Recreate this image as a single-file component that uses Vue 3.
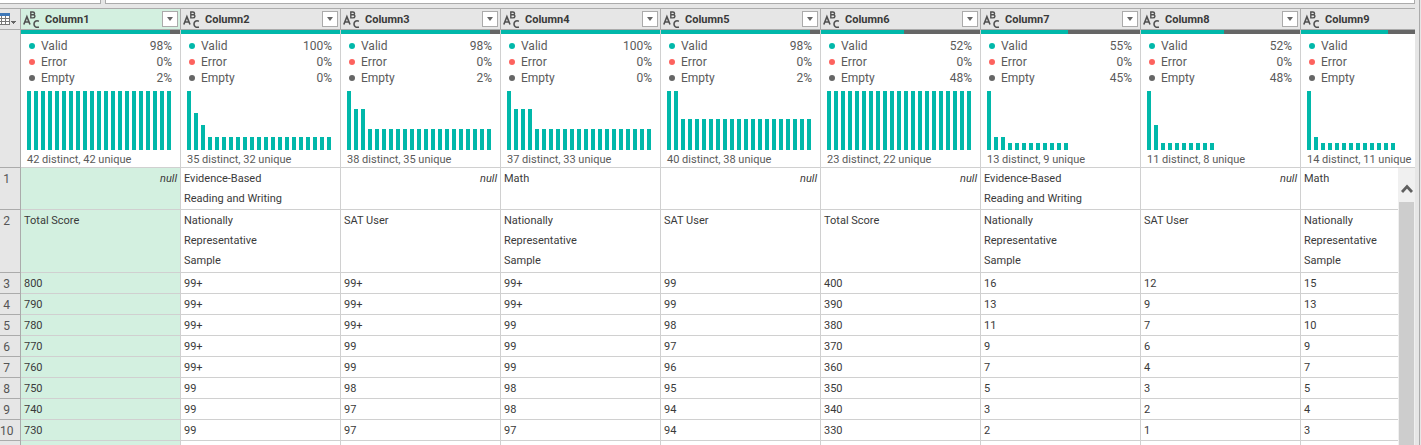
<script setup>
const run = (n, h) => Array(n).fill(h)

const columns = [
  { name: 'Column1', stats: ['98%', '0%', '2%'], share: 94, bars: run(21, 59), distinct: 42, unique: 42 },
  { name: 'Column2', stats: ['100%', '0%', '0%'], share: 100, bars: [59, 37, 25, ...run(18, 13)], distinct: 35, unique: 32 },
  { name: 'Column3', stats: ['98%', '0%', '2%'], share: 94, bars: [59, 41, 41, ...run(18, 21)], distinct: 38, unique: 35 },
  { name: 'Column4', stats: ['100%', '0%', '0%'], share: 100, bars: [59, 41, 41, 41, ...run(17, 21)], distinct: 37, unique: 33 },
  { name: 'Column5', stats: ['98%', '0%', '2%'], share: 94, bars: [59, 59, ...run(19, 31)], distinct: 40, unique: 38 },
  { name: 'Column6', stats: ['52%', '0%', '48%'], share: 52, bars: run(21, 59), distinct: 23, unique: 22 },
  { name: 'Column7', stats: ['55%', '0%', '45%'], share: 55, bars: [59, 13, 13, ...run(9, 7)], distinct: 13, unique: 9 },
  { name: 'Column8', stats: ['52%', '0%', '48%'], share: 52, bars: [59, 25, ...run(8, 7)], distinct: 11, unique: 8 },
  { name: 'Column9', stats: null, share: 76, bars: [59, 13, ...run(11, 7)], distinct: 14, unique: 11 }
]

const measures = ['Valid', 'Error', 'Empty']

const sample = 'Nationally\nRepresentative\nSample'
const reading = 'Evidence-Based\nReading and Writing'

const rows = [
  [null, reading, null, 'Math', null, null, reading, null, 'Math'],
  ['Total Score', sample, 'SAT User', sample, 'SAT User', 'Total Score', sample, 'SAT User', sample],
  ['800', '99+', '99+', '99+', '99', '400', '16', '12', '15'],
  ['790', '99+', '99+', '99+', '99', '390', '13', '9', '13'],
  ['780', '99+', '99+', '99', '98', '380', '11', '7', '10'],
  ['770', '99+', '99', '99', '97', '370', '9', '6', '9'],
  ['760', '99+', '99', '99', '96', '360', '7', '4', '7'],
  ['750', '99', '98', '98', '95', '350', '5', '3', '5'],
  ['740', '99', '97', '98', '94', '340', '3', '2', '4'],
  ['730', '99', '97', '97', '94', '330', '2', '1', '3'],
  ['', '', '', '', '', '', '', '', '']
]
</script>

<template>
  <div class="editor">
    <div class="formula">
      <div class="formula-name"></div>
      <div class="formula-text"></div>
    </div>
    <div class="viewport">
      <table class="grid">
        <colgroup>
          <col class="col-index" />
          <col v-for="c in columns" :key="c.name" class="col-data" />
        </colgroup>
        <thead>
          <tr class="names">
            <th class="corner">
              <button class="table-menu" aria-label="Table menu">
                <svg width="16" height="14" viewBox="0 0 16 14" shape-rendering="crispEdges">
                  <rect x="0" y="1" width="10" height="12" fill="#777" />
                  <rect x="0" y="1" width="10" height="3" fill="#3f78b8" />
                  <path d="M0 4h1v2H0zM2 4h3v2H2zM6 4h3v2H6zM0 7h1v2H0zM2 7h3v2H2zM6 7h3v2H6zM0 10h1v2H0zM2 10h3v2H2zM6 10h3v2H6z" fill="#fff" />
                  <path d="M11 9h5v1h-1v1h-1v1h-1v-1h-1v-1h-1z" fill="#666" />
                </svg>
              </button>
            </th>
            <th v-for="(c, i) in columns" :key="c.name" :class="{ selected: i === 0 }" scope="col">
              <div class="name">
                <svg class="type" width="17" height="18" viewBox="0 0 17 18" fill="none" stroke="#505050" stroke-width="1.6">
                  <path d="M.8 14.5 3.9 6.7 7 14.5M1.9 12h4" />
                  <path d="M7.8 2v5.9h2.1c2.6 0 2.6-3 .4-3.1H7.8h2.1c2.3 0 2.1-2.8 0-2.8z" stroke-width="1.4" />
                  <path d="M15.9 11.2c-2.7-1.1-4.9.2-4.9 2.9s2.2 3.8 4.9 2.8" />
                </svg>
                <span class="label">{{ c.name }}</span>
                <button v-if="c.stats" class="filter" :aria-label="'Filter ' + c.name">
                  <svg width="6" height="4" viewBox="0 0 6 4"><path d="M0 0h6L3 4z" fill="#666" /></svg>
                </button>
              </div>
            </th>
          </tr>
          <tr class="profiles">
            <th class="index"></th>
            <td v-for="c in columns" :key="c.name">
              <div class="quality"><div class="quality-valid" :style="{ width: c.share + '%' }"></div></div>
              <div class="profile">
                <dl class="stats">
                  <div v-for="(m, k) in measures" :key="m" class="stat" :class="m.toLowerCase()">
                    <dt>{{ m }}</dt>
                    <dd v-if="c.stats">{{ c.stats[k] }}</dd>
                  </div>
                </dl>
                <div class="bars">
                  <div v-for="(h, b) in c.bars" :key="b" class="bar" :style="{ height: h + 'px' }"></div>
                </div>
                <div class="summary">{{ c.distinct }} distinct, {{ c.unique }} unique</div>
              </div>
            </td>
          </tr>
        </thead>
        <tbody>
          <tr v-for="(row, r) in rows" :key="r">
            <th class="index" scope="row"><div class="number">{{ r < 10 ? r + 1 : '' }}</div></th>
            <td v-for="(v, i) in row" :key="i" class="cell" :class="{ selected: i === 0, nil: v === null }">{{ v === null ? 'null' : v }}</td>
          </tr>
        </tbody>
      </table>
      <div class="scrollbar">
        <button class="scroll-up" aria-label="Scroll up">
          <svg width="12" height="10" viewBox="0 0 12 10"><path d="M1 8 6 2.5 11 8" fill="none" stroke="#606060" stroke-width="2.8" /></svg>
        </button>
        <div class="thumb"></div>
      </div>
    </div>
  </div>
</template>

<style>
body {
  background: #e6e6e6;
}
</style>

<style scoped>
.editor {
  box-sizing: border-box;
  display: flex;
  flex-direction: column;
  height: 100vh;
  margin-right: 1px;
  padding-right: 4px;
  border-right: 1px solid #ababab;
  overflow: hidden;
  background: #e6e6e6;
  color: #3a3a3a;
  font-family: Roboto, "Open Sans", sans-serif;
  font-size: 11px;
}
.formula {
  display: flex;
  flex: none;
  gap: 4px;
  height: 4px;
  margin-bottom: 4px;
}
.formula-name,
.formula-text {
  box-sizing: border-box;
  border: 1px solid #ababab;
  border-top: 0;
  background: #fff;
}
.formula-name {
  width: 101px;
  border-left: 0;
}
.formula-text {
  flex: 1;
}
.viewport {
  position: relative;
  flex: 1;
  min-height: 0;
  overflow: hidden;
  border-top: 1px solid #ababab;
}
.grid {
  width: 100%;
  table-layout: fixed;
  border-collapse: separate;
  border-spacing: 0;
}
.col-index {
  width: 21px;
}
.col-data {
  width: 160px;
}
.col-data:last-child {
  width: auto;
}
th,
td {
  box-sizing: border-box;
  padding: 0;
  border-right: 1px solid #d0d0d0;
  border-bottom: 1px solid #d0d0d0;
  background: #fff;
  text-align: left;
  vertical-align: top;
}
.names th {
  height: 21px;
  border-color: #ababab;
  background: #e6e6e6;
}
td:last-child,
.names th:last-child {
  border-right: 0;
}
th.selected,
td.selected,
.names th.selected {
  background: #d3f0e0;
}
.name {
  display: flex;
  align-items: center;
  height: 20px;
  padding: 0 2px;
}
.label {
  flex: 1;
  margin-left: 5px;
  padding-top: 2px;
  font-weight: 700;
  line-height: 18px;
}
button {
  display: flex;
  align-items: center;
  justify-content: center;
  padding: 0;
  border: 0;
  background: none;
}
.table-menu {
  height: 20px;
}
.filter {
  box-sizing: border-box;
  width: 16px;
  height: 16px;
  border: 1px solid #ababab;
  background: #fff;
}
th.index {
  border-color: #ababab;
  background: #e6e6e6;
  color: #555;
  font-size: 12px;
  font-weight: 400;
  line-height: 18px;
}
.number {
  width: 13px;
  padding-top: 2px;
  text-align: center;
}
.quality {
  height: 4px;
  background: #666;
}
.quality-valid {
  height: 4px;
  background: #01b8aa;
}
.profile {
  padding: 4px 6px 0;
  color: #5a5a5a;
}
.stats {
  margin: 0;
  padding-right: 2px;
}
.stat {
  display: flex;
  align-items: center;
  height: 16px;
  font-size: 12px;
  line-height: 16px;
}
.stat::before {
  width: 6px;
  height: 6px;
  margin: 0 6px 0 2px;
  border-radius: 50%;
  background: #666;
  content: "";
}
.stat.valid::before {
  background: #01b8aa;
}
.stat.error::before {
  background: #fd625e;
}
dt {
  flex: 1;
}
dd {
  margin: 0;
}
.bars {
  display: flex;
  align-items: flex-end;
  gap: 3px;
  height: 59px;
  margin-top: 5px;
}
.bar {
  flex: none;
  width: 4px;
  background: #01b8aa;
}
.summary {
  height: 17px;
  line-height: 20px;
  white-space: nowrap;
}
.cell {
  height: 21px;
  padding: 2px 3px 0;
  line-height: 18px;
  white-space: pre-line;
}
tbody tr:nth-child(-n + 2) .cell {
  padding-top: 1px;
  line-height: 20px;
}
tbody tr:nth-child(2) .cell {
  padding-bottom: 1px;
}
.nil {
  font-style: italic;
  text-align: right;
}
.scrollbar {
  position: absolute;
  top: 159px;
  right: 0;
  bottom: 0;
  display: flex;
  flex-direction: column;
  width: 17px;
  background: #f0f0f0;
}
.scroll-up {
  flex: none;
  width: 17px;
  height: 34px;
  padding-top: 8px;
}
.thumb {
  flex: 1;
  margin: 0 1px;
  background: #cdcdcd;
}
</style>
